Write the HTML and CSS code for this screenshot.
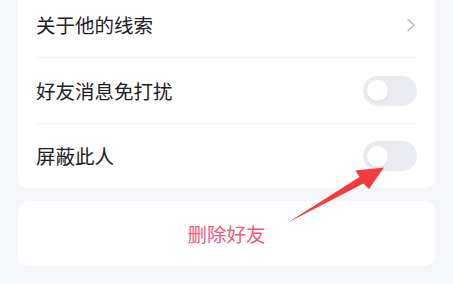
FILE: index.html
```html
<!DOCTYPE html>
<html lang="zh-CN">
<head>
  <meta charset="UTF-8" />
  <meta name="viewport" content="width=device-width, initial-scale=1.0" />
  <title>好友设置</title>
  <link rel="stylesheet" href="styles.css">
</head>
<body>
  <div class="page">
    <div class="card">
      <div class="row">
        <span class="label">关于他的线索</span>
        <svg class="chevron" width="10" height="14" viewBox="0 0 10 14">
          <polyline points="2,1.5 8,7 2,12.5" fill="none" stroke="#b9bbc0" stroke-width="1.6" stroke-linecap="round" stroke-linejoin="round" />
        </svg>
      </div>
      <div class="row">
        <span class="label">好友消息免打扰</span>
        <div class="switch"><div class="knob"></div></div>
      </div>
      <div class="row">
        <span class="label">屏蔽此人</span>
        <div class="switch"><div class="knob"></div></div>
      </div>
    </div>

    <div class="card danger">删除好友</div>

    <svg class="pointer" width="453" height="284" viewBox="0 0 453 284">
      <polygon points="287,231 359.5,185 355.5,178.5 384,175.5 369,197 363.5,191.5" fill="#f23b3b" />
    </svg>
  </div>
</body>
</html>
```

FILE: styles.css
```css
body {
  margin: 0;
  padding: 0;
  background-color: #f5f6fa;
  font-family: "Noto Sans CJK SC", "Noto Sans", sans-serif;
  color: #1f2024;
  overflow: hidden;
}

.page {
  position: relative;
  height: 284px;
  padding: 0 18px;
}

.card {
  background: #fff;
  border-radius: 10px;
}

.card:first-child {
  margin-top: -8px;
  border-radius: 0 0 10px 10px;
}

.row {
  height: 65px;
  margin: 0 18px;
  display: flex;
  align-items: center;
  justify-content: space-between;
  border-bottom: 1px solid #eff0f3;
}

.row:last-child {
  border-bottom: none;
  height: 64px;
}

.label {
  font-size: 19.5px;
  line-height: 1;
}

.chevron {
  margin-right: 1px;
}

.switch {
  width: 54px;
  height: 30px;
  border-radius: 15px;
  background: #e9ebf0;
  display: flex;
  align-items: center;
  padding-left: 4px;
  box-sizing: border-box;
}

.knob {
  width: 21px;
  height: 21px;
  border-radius: 50%;
  background: #fff;
  box-shadow: 0 1px 2px rgba(0, 0, 0, 0.08);
}

.danger {
  margin-top: 13px;
  height: 65px;
  display: flex;
  align-items: center;
  justify-content: center;
  font-size: 19.5px;
  color: #f2587a;
}

.pointer {
  position: absolute;
  left: 0;
  top: 0;
  pointer-events: none;
}
```
